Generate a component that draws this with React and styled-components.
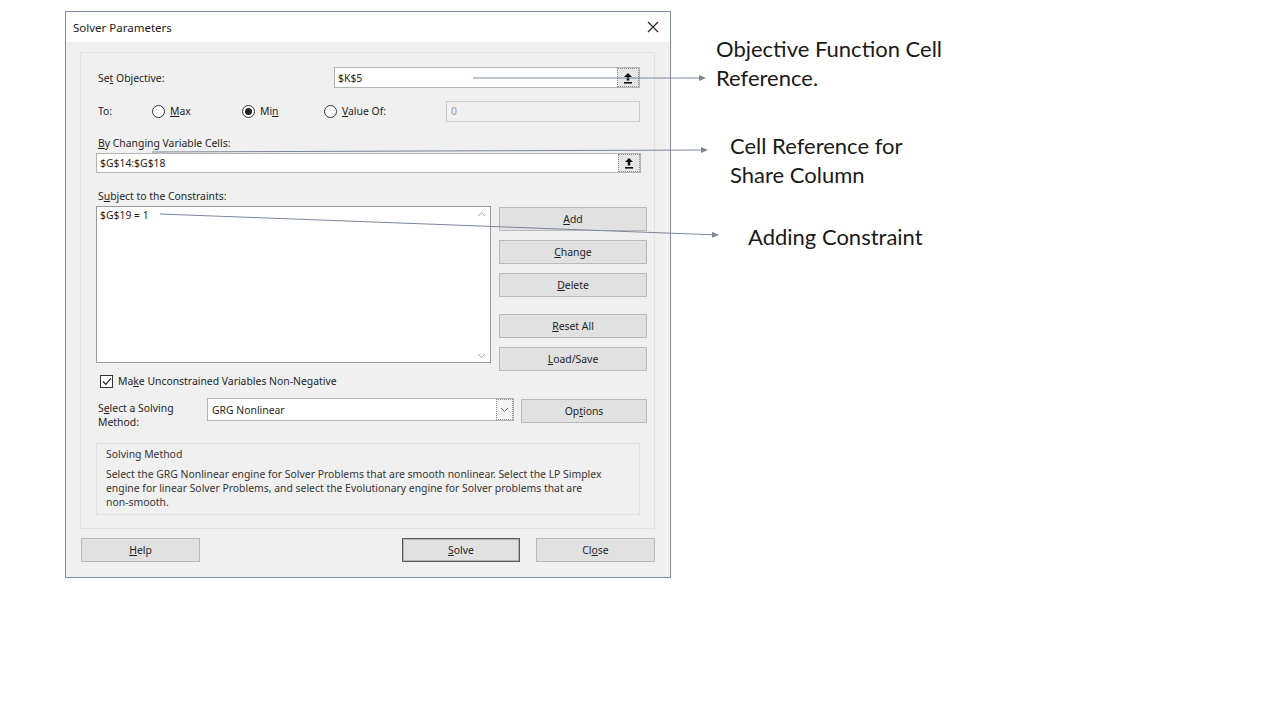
import React from 'react';
import styled, { createGlobalStyle } from 'styled-components';

const Global = createGlobalStyle`
  html, body { margin: 0; padding: 0; background: #ffffff; }
  body { font-family: "Noto Sans", "DejaVu Sans", sans-serif; color: #1e1e1e; }
  * { box-sizing: border-box; }
`;

const Page = styled.div`
  position: relative;
  width: 1280px;
  height: 720px;
  overflow: hidden;
  display: flex;
  align-items: flex-start;
  padding: 11px 0 0 65px;
`;

const Dialog = styled.div`
  width: 606px;
  height: 567px;
  border: 1px solid #7d8ca3;
  background: #f0f0f0;
  display: flex;
  flex-direction: column;
`;

const TitleBar = styled.div`
  height: 30px;
  background: #ffffff;
  display: flex;
  align-items: center;
  justify-content: space-between;
  padding: 0 11px 0 7px;
  font-size: 11.5px;
  color: #1a1a1a;
`;

const Body = styled.div`
  flex: 1;
  display: flex;
  flex-direction: column;
  padding: 10px 0 0 14px;
`;

const Group = styled.div`
  width: 575px;
  height: 477px;
  border: 1px solid #e2e2e2;
  padding: 14px 0 0 15px;
  display: flex;
  flex-direction: column;
  font-size: 10.4px;
`;

const Row = styled.div`
  display: flex;
  align-items: ${p => p.$align || 'center'};
  height: ${p => (p.$h ? `${p.$h}px` : 'auto')};
  margin-top: ${p => p.$mt || 0}px;
`;

const Label = styled.div`
  width: ${p => (p.$w ? `${p.$w}px` : 'auto')};
  margin-left: ${p => p.$ml ?? 2}px;
  padding-top: ${p => p.$pt || 0}px;
  line-height: 14px;
  white-space: nowrap;
  flex-shrink: 0;
`;

const Field = styled.div`
  width: ${p => p.$w}px;
  height: ${p => p.$h || 21}px;
  background: ${p => (p.$disabled ? '#f0f0f0' : '#ffffff')};
  border: 1px solid ${p => (p.$disabled ? '#cccccc' : '#b4b4b4')};
  display: flex;
  align-items: center;
  padding-left: ${p => p.$pl ?? 3}px;
  color: ${p => (p.$disabled ? '#9a9a9a' : '#1e1e1e')};
  margin-left: ${p => p.$ml || 0}px;
  flex-shrink: 0;
`;

const FieldText = styled.span`
  flex: 1;
  white-space: nowrap;
`;

const RefButton = styled.div`
  width: 22px;
  height: 100%;
  border: 1px dotted #8a8a8a;
  background: #e6e6e6;
  display: flex;
  align-items: center;
  justify-content: center;
`;

const RadioItem = styled.div`
  width: ${p => p.$w}px;
  display: flex;
  align-items: center;
  gap: 5px;
  flex-shrink: 0;
`;

const RadioCircle = styled.span`
  width: 13px;
  height: 13px;
  border-radius: 50%;
  border: 1px solid #333;
  background: #fff;
  display: flex;
  align-items: center;
  justify-content: center;
  &::after {
    content: '';
    display: ${p => (p.$on ? 'block' : 'none')};
    width: 7px;
    height: 7px;
    border-radius: 50%;
    background: #222;
  }
`;

const ConstraintArea = styled.div`
  display: flex;
  align-items: flex-start;
  height: 157px;
  margin-top: 3px;
`;

const ListBox = styled.div`
  width: 395px;
  height: 157px;
  background: #fff;
  border: 1px solid #9a9a9a;
  display: flex;
`;

const ListItems = styled.div`
  flex: 1;
  padding: 2px 3px;
  line-height: 13px;
`;

const ScrollBar = styled.div`
  width: 17px;
  display: flex;
  flex-direction: column;
  justify-content: space-between;
  align-items: center;
  padding: 4px 0 3px;
`;

const SideButtons = styled.div`
  margin-left: 8px;
  padding-top: 1px;
  display: flex;
  flex-direction: column;
  width: 148px;
`;

const Button = styled.div`
  width: ${p => (p.$w ? `${p.$w}px` : '100%')};
  height: 24px;
  background: #e1e1e1;
  border: 1px solid ${p => (p.$default ? '#5a5a5a' : '#b9b9b9')};
  box-shadow: ${p => (p.$default ? 'inset 0 0 0 1px #b0b0b0' : 'none')};
  display: flex;
  align-items: center;
  justify-content: center;
  font-size: 10.4px;
  color: #1e1e1e;
  margin-top: ${p => p.$mt || 0}px;
  margin-left: ${p => p.$ml || 0}px;
  flex-shrink: 0;
`;

const CheckRow = styled.div`
  display: flex;
  align-items: center;
  gap: 5px;
  margin-top: 11px;
  margin-left: 4px;
  height: 14px;
`;

const CheckBox = styled.span`
  width: 13px;
  height: 13px;
  border: 1px solid #333;
  background: #fff;
  display: flex;
  align-items: center;
  justify-content: center;
`;

const Select = styled.div`
  width: 307px;
  height: 23px;
  background: #fff;
  border: 1px solid #b4b4b4;
  display: flex;
  align-items: center;
  padding-left: 4px;
`;

const SelectArrow = styled.div`
  width: 17px;
  height: 100%;
  border: 1px dotted #8a8a8a;
  display: flex;
  align-items: center;
  justify-content: center;
  background: #f4f4f4;
`;

const InfoBox = styled.div`
  width: 544px;
  height: 72px;
  margin-top: 14px;
  border: 1px solid #e0e0e0;
  padding: 3px 9px;
  color: #333;
`;

const InfoTitle = styled.div`
  line-height: 14px;
`;

const InfoText = styled.div`
  margin-top: 6px;
  line-height: 14px;
  white-space: nowrap;
`;

const Footer = styled.div`
  display: flex;
  margin-top: 9px;
  padding-left: 1px;
  padding-right: 15px;
`;

const Spacer = styled.div`
  flex: 1;
`;

const Notes = styled.div`
  display: flex;
  flex-direction: column;
  margin-left: 45px;
  padding-top: 23px;
  font-family: Lato, "Noto Sans", sans-serif;
  font-size: 22px;
  color: #1a1a1a;
`;

const Note = styled.div`
  line-height: 29px;
  margin-left: ${p => p.$indent || 0}px;
  margin-top: ${p => p.$mt || 0}px;
  white-space: nowrap;
`;

const Overlay = styled.svg`
  position: absolute;
  left: 0;
  top: 0;
  pointer-events: none;
`;

const UpIcon = () => (
  <svg width="10" height="12" viewBox="0 0 10 12">
    <path d="M5 1 L9 5 L6.3 5 L6.3 8.5 L3.7 8.5 L3.7 5 L1 5 Z" fill="#111" />
    <rect x="1" y="10" width="8" height="1.6" fill="#111" />
  </svg>
);

const Chevron = ({ up, color = '#a8a8a8' }) => (
  <svg width="9" height="6" viewBox="0 0 9 6">
    <path d={up ? 'M1 5 L4.5 1.5 L8 5' : 'M1 1 L4.5 4.5 L8 1'} fill="none" stroke={color} strokeWidth="1" />
  </svg>
);

const Arrow = ({ x1, y1, x2, y2 }) => {
  const a = Math.atan2(y2 - y1, x2 - x1);
  const len = 7;
  const w = 3;
  const bx = x2 - len * Math.cos(a);
  const by = y2 - len * Math.sin(a);
  const px = -Math.sin(a) * w;
  const py = Math.cos(a) * w;
  return (
    <g>
      <line x1={x1} y1={y1} x2={bx} y2={by} stroke="#7b8696" strokeWidth="1" />
      <path d={`M${x2} ${y2} L${bx + px} ${by + py} L${bx - px} ${by - py} Z`} fill="#7b8696" />
    </g>
  );
};

export default function App() {
  return (
    <>
      <Global />
      <Page>
        <Dialog>
          <TitleBar>
            <span>Solver Parameters</span>
            <svg width="12" height="12" viewBox="0 0 12 12">
              <path d="M1 1 L11 11 M11 1 L1 11" stroke="#222" strokeWidth="1.1" />
            </svg>
          </TitleBar>
          <Body>
            <Group>
              <Row $h={21}>
                <Label $w={236}>Se<u>t</u> Objective:</Label>
                <Field $w={306} $pl={3}>
                  <FieldText>$K$5</FieldText>
                  <RefButton><UpIcon /></RefButton>
                </Field>
              </Row>
              <Row $h={22} $mt={12}>
                <Label $w={54}>To:</Label>
                <RadioItem $w={90}><RadioCircle /><span><u>M</u>ax</span></RadioItem>
                <RadioItem $w={82}><RadioCircle $on /><span>Mi<u>n</u></span></RadioItem>
                <RadioItem $w={122}><RadioCircle /><span><u>V</u>alue Of:</span></RadioItem>
                <Field $w={194} $disabled $pl={4}>
                  <FieldText>0</FieldText>
                </Field>
              </Row>
              <Row $mt={14}>
                <Label><u>B</u>y Changing Variable Cells:</Label>
              </Row>
              <Row $mt={3}>
                <Field $w={545} $h={20}>
                  <FieldText>$G$14:$G$18</FieldText>
                  <RefButton><UpIcon /></RefButton>
                </Field>
              </Row>
              <Row $mt={16}>
                <Label>S<u>u</u>bject to the Constraints:</Label>
              </Row>
              <ConstraintArea>
                <ListBox>
                  <ListItems>$G$19 = 1</ListItems>
                  <ScrollBar>
                    <Chevron up />
                    <Chevron />
                  </ScrollBar>
                </ListBox>
                <SideButtons>
                  <Button><u>A</u>dd</Button>
                  <Button $mt={9}><u>C</u>hange</Button>
                  <Button $mt={9}><u>D</u>elete</Button>
                  <Button $mt={17}><u>R</u>eset All</Button>
                  <Button $mt={9}><u>L</u>oad/Save</Button>
                </SideButtons>
              </ConstraintArea>
              <CheckRow>
                <CheckBox>
                  <svg width="10" height="9" viewBox="0 0 10 9">
                    <path d="M1 4.5 L3.8 7.3 L9 1.3" fill="none" stroke="#222" strokeWidth="1.2" />
                  </svg>
                </CheckBox>
                <span>Ma<u>k</u>e Unconstrained Variables Non-Negative</span>
              </CheckRow>
              <Row $align="flex-start" $mt={10}>
                <Label $w={109} $pt={3}>S<u>e</u>lect a Solving<br />Method:</Label>
                <Select>
                  <FieldText>GRG Nonlinear</FieldText>
                  <SelectArrow><Chevron color="#666" /></SelectArrow>
                </Select>
                <Button $w={126} $ml={7} $mt={1}>Op<u>t</u>ions</Button>
              </Row>
              <InfoBox>
                <InfoTitle>Solving Method</InfoTitle>
                <InfoText>
                  Select the GRG Nonlinear engine for Solver Problems that are smooth nonlinear. Select the LP Simplex<br />
                  engine for linear Solver Problems, and select the Evolutionary engine for Solver problems that are<br />
                  non-smooth.
                </InfoText>
              </InfoBox>
            </Group>
            <Footer>
              <Button $w={119}><u>H</u>elp</Button>
              <Spacer />
              <Button $w={118} $default><u>S</u>olve</Button>
              <Button $w={119} $ml={16}>Cl<u>o</u>se</Button>
            </Footer>
          </Body>
        </Dialog>
        <Notes>
          <Note>Objective Function Cell</Note>
          <Note>Reference.</Note>
          <Note $indent={14} $mt={39}>Cell Reference for</Note>
          <Note $indent={14}>Share Column</Note>
          <Note $indent={32} $mt={33}>Adding Constraint</Note>
        </Notes>
        <Overlay width="1280" height="720" viewBox="0 0 1280 720">
          <Arrow x1={473} y1={78} x2={706} y2={78} />
          <Arrow x1={152} y1={152} x2={708} y2={150} />
          <Arrow x1={160} y1={214} x2={719} y2={235} />
        </Overlay>
      </Page>
    </>
  );
}
